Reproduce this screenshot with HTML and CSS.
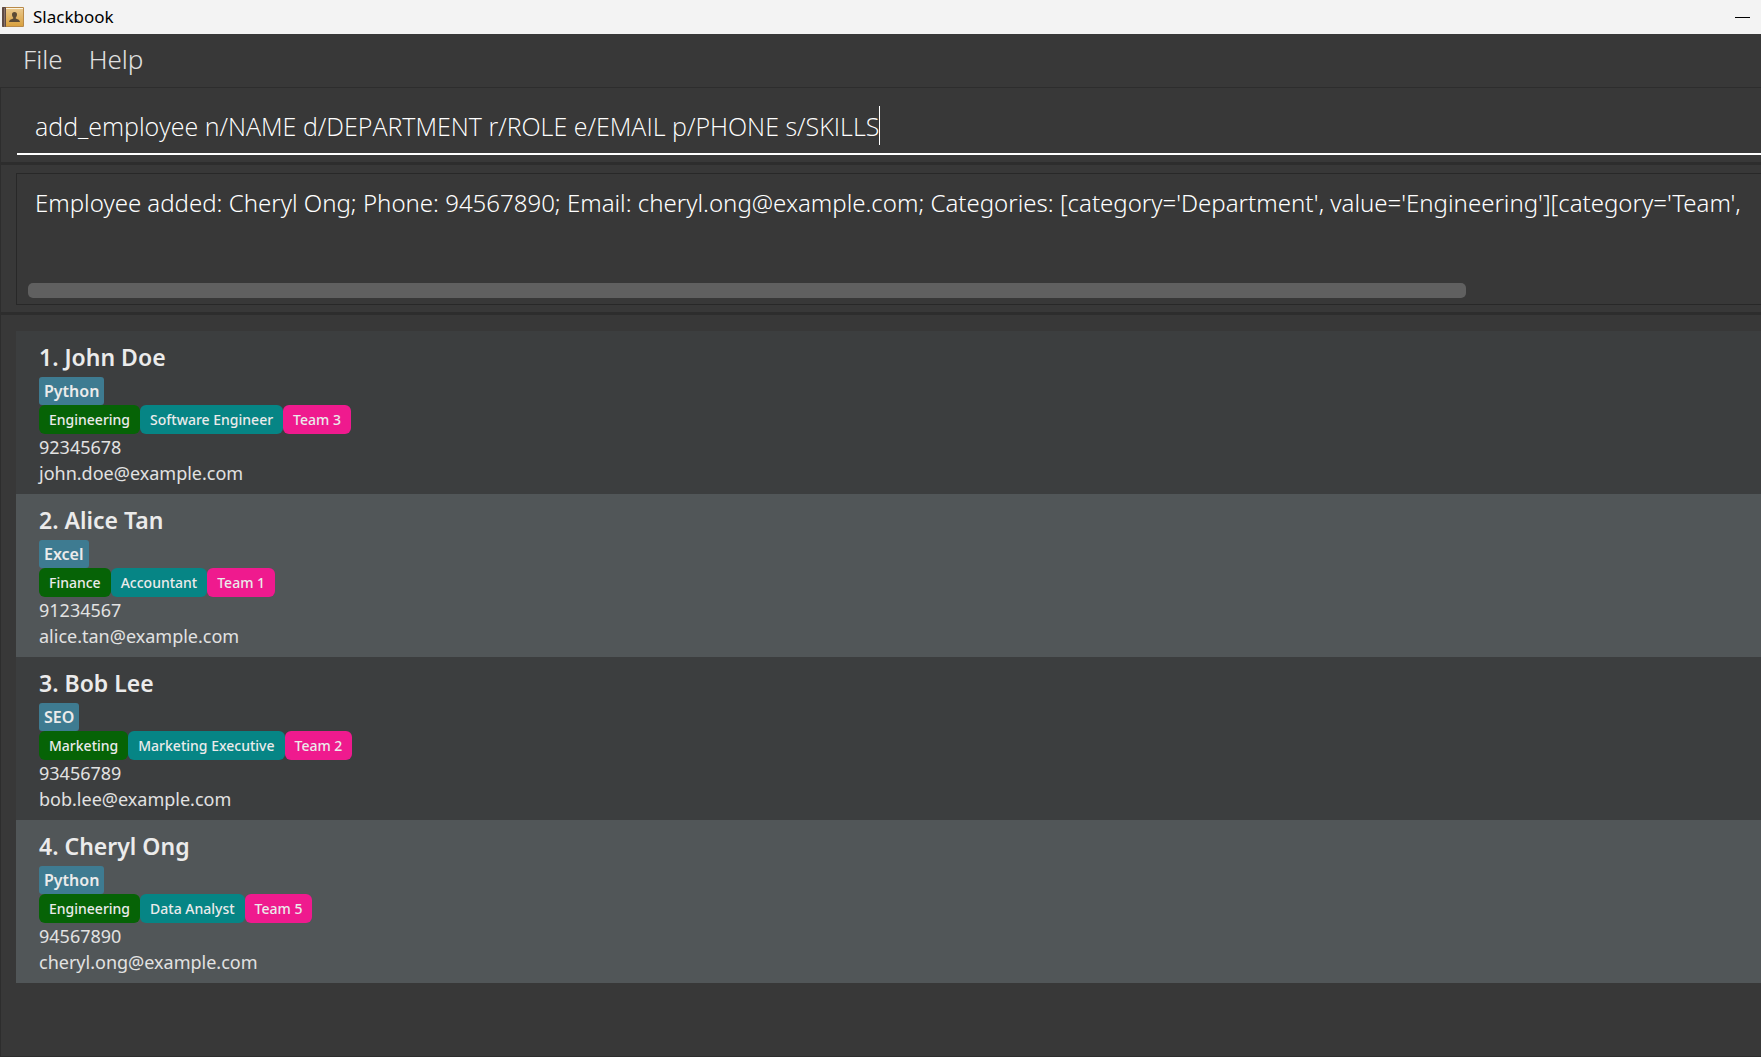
FILE: index.html
```html
<!DOCTYPE html>
<html lang="en">
<head>
<meta charset="utf-8">
<title>Slackbook</title>
<link rel="stylesheet" href="styles.css">
</head>
<body>
<header class="titlebar">
  <svg class="app-icon" viewBox="0 0 22 21" aria-hidden="true">
    <defs>
      <linearGradient id="cover" x1="0" y1="0" x2="0" y2="1">
        <stop offset="0" stop-color="#e9c88e"/>
        <stop offset="1" stop-color="#d9a13f"/>
      </linearGradient>
    </defs>
    <rect x="0" y="0" width="22" height="20" rx="1" fill="#b98a4a"/>
    <rect x="0" y="0" width="4" height="20" rx="1" fill="#5d4a44"/>
    <rect x="2" y="1" width="1" height="19" fill="#87706a"/>
    <rect x="4" y="1" width="17" height="18" fill="url(#cover)"/>
    <rect x="4" y="1" width="17" height="1" fill="#fbf3df"/>
    <path d="M12.500 5c1.700 0 2.600 1.100 2.500 2.700 0 1.200-.6 2.100-1.200 2.700v1.100c1.200.6 3.700.8 4.200 3.500H7c.5-2.700 3-2.900 4.200-3.500v-1.100C10.600 9.800 10 8.900 10 7.700 9.900 6.100 10.800 5 12.500 5z" fill="#5b4a35"/>
  </svg>
  <h1 class="app-title">Slackbook</h1>
  <button class="minimize" type="button" aria-label="Minimize"></button>
</header>
<nav class="menubar">
  <button class="menu" type="button">File</button>
  <button class="menu" type="button">Help</button>
</nav>
<main class="content">
  <section class="pane command-pane">
    <div class="command-line">
      <input class="command" type="text" aria-label="Command" size="50" value="add_employee n/NAME d/DEPARTMENT r/ROLE e/EMAIL p/PHONE s/SKILLS">
      <span class="caret"></span>
    </div>
  </section>
  <section class="pane result-pane">
    <div class="result">
      <textarea class="message" aria-label="Result" rows="1" wrap="off" readonly>Employee added: Cheryl Ong; Phone: 94567890; Email: cheryl.ong@example.com; Categories: [category='Department', value='Engineering'][category='Team',</textarea>
      <div class="scroll-thumb"></div>
    </div>
  </section>
  <section class="pane list-pane">
    <ol class="employees">
      <li class="employee">
        <h2 class="name">1. John Doe</h2>
        <div class="skills"><span class="skill">Python</span></div>
        <div class="tags"><span class="tag department">Engineering</span><span class="tag role">Software Engineer</span><span class="tag team">Team 3</span></div>
        <p class="detail">92345678</p>
        <p class="detail">john.doe@example.com</p>
      </li>
      <li class="employee">
        <h2 class="name">2. Alice Tan</h2>
        <div class="skills"><span class="skill">Excel</span></div>
        <div class="tags"><span class="tag department">Finance</span><span class="tag role">Accountant</span><span class="tag team">Team 1</span></div>
        <p class="detail">91234567</p>
        <p class="detail">alice.tan@example.com</p>
      </li>
      <li class="employee">
        <h2 class="name">3. Bob Lee</h2>
        <div class="skills"><span class="skill">SEO</span></div>
        <div class="tags"><span class="tag department">Marketing</span><span class="tag role">Marketing Executive</span><span class="tag team">Team 2</span></div>
        <p class="detail">93456789</p>
        <p class="detail">bob.lee@example.com</p>
      </li>
      <li class="employee">
        <h2 class="name">4. Cheryl Ong</h2>
        <div class="skills"><span class="skill">Python</span></div>
        <div class="tags"><span class="tag department">Engineering</span><span class="tag role">Data Analyst</span><span class="tag team">Team 5</span></div>
        <p class="detail">94567890</p>
        <p class="detail">cheryl.ong@example.com</p>
      </li>
    </ol>
  </section>
</main>
</body>
</html>
```
FILE: styles.css
```css
* {
  box-sizing: border-box;
}

body {
  margin: 0;
  min-height: 100vh;
  display: flex;
  flex-direction: column;
  overflow-x: hidden;
  background: #383838;
  color: #fff;
  font-family: "Noto Sans", "Open Sans", sans-serif;
}

h1, h2, p, ol {
  margin: 0;
  padding: 0;
}

button, input, textarea {
  margin: 0;
  padding: 0;
  border: 0;
  outline: 0;
  background: none;
  color: inherit;
  font-family: inherit;
}

.titlebar {
  display: flex;
  align-items: center;
  gap: 9px;
  height: 34px;
  padding: 0 11px 0 2px;
  background: #f3f3f3;
  color: #000;
}

.app-icon {
  width: 22px;
  height: 21px;
}

.app-title {
  flex: 1;
  font-size: 17px;
  font-weight: 400;
  line-height: 26px;
}

.minimize {
  width: 15px;
  height: 1px;
  background: #000;
}

.menubar {
  display: flex;
  gap: 26px;
  height: 53px;
  padding: 0 23px;
}

.menu {
  color: #e0e0e0;
  font-size: 26px;
  font-weight: 300;
  line-height: 50px;
  height: 50px;
}

.content {
  flex: 1;
  display: flex;
  flex-direction: column;
}

.pane {
  border-left: 1px solid #2d2d2d;
  border-top: 2px solid #2d2d2d;
  border-bottom: 1px solid #2d2d2d;
}

.command-pane {
  height: 76px;
  border-top-width: 1px;
  padding: 10px 0 8px 16px;
}

.command-line {
  display: flex;
  align-items: center;
  height: 57px;
  padding: 0 16px 0 18px;
  border-bottom: 2px solid #fff;
}

.command {
  field-sizing: content;
  font-family: "Open Sans", "Noto Sans", sans-serif;
  font-size: 25px;
  font-weight: 300;
  line-height: 38px;
}

.caret {
  width: 1px;
  height: 39px;
  background: #fff;
}

.result-pane {
  padding: 8px 0 7px 15px;
}

.result {
  display: flex;
  flex-direction: column;
  justify-content: space-between;
  height: 132px;
  padding: 10px 0 6px 11px;
  border: 1px solid #282828;
  border-right: 0;
}

.message {
  width: 100%;
  height: 38px;
  padding-left: 7px;
  overflow: hidden;
  resize: none;
  font-size: 24px;
  font-weight: 300;
  line-height: 38px;
}

.scroll-thumb {
  width: 83%;
  height: 15px;
  border-radius: 5px;
  background: #606060;
}

.list-pane {
  flex: 1;
  padding: 16px 0 16px 15px;
}

.employees {
  list-style: none;
}

.employee {
  height: 163px;
  padding: 8px 23px;
  background: #3c3e3f;
}

.employee:nth-child(even) {
  background: #515658;
}

.name {
  margin-bottom: 2px;
  color: #ebebeb;
  font-size: 23px;
  font-weight: 600;
  line-height: 36px;
}

.skills, .tags {
  display: flex;
}

.skill {
  padding: 0 5px;
  border-radius: 3px;
  background: #3e7b91;
  color: #ebebeb;
  font-size: 16px;
  font-weight: 600;
  line-height: 28px;
}

.tag {
  padding: 0 10px;
  border-radius: 6px;
  color: #ebebeb;
  font-size: 14px;
  font-weight: 500;
  line-height: 29px;
}

.department {
  background: #066306;
}

.role {
  background: #068585;
}

.team {
  background: #ef1a8e;
}

.detail {
  color: #e2e2e2;
  font-size: 18px;
  line-height: 26px;
}
```
